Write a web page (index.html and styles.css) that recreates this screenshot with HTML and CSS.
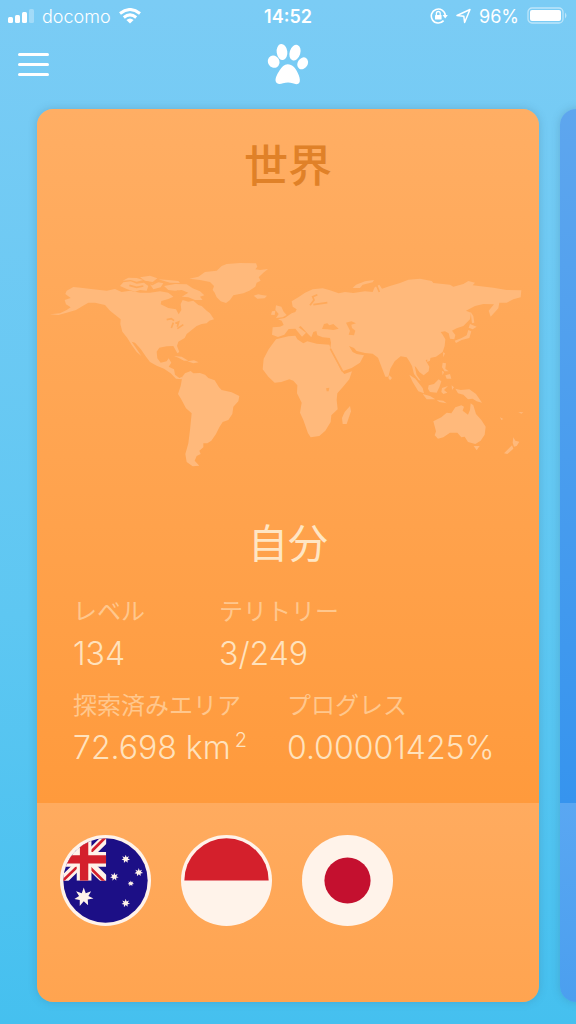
FILE: index.html
```html
<!DOCTYPE html>
<html lang="ja">

<head>
    <meta charset="UTF-8">
    <meta name="viewport" content="width=device-width, initial-scale=1.0">
    <title>世界</title>
    <link rel="stylesheet" href="styles.css">
</head>

<body>
    <div class="status-bar">
        <div class="status-left">
            <svg class="signal" width="26" height="16" viewBox="0 0 26 16" fill="#fff">
                <rect x="0" y="9" width="5" height="6" rx="1.5" />
                <rect x="7" y="7" width="5" height="8" rx="1.5" />
                <rect x="14" y="4" width="5" height="11" rx="1.5" />
                <rect x="21" y="1" width="5" height="14" rx="1.5" opacity="0.3" />
            </svg>
            <span>docomo</span>
            <svg width="22" height="16" viewBox="0 0 22 16" fill="none" stroke="#fff" stroke-width="3">
                <path d="M1 5.5Q11 -2.5 21 5.5" />
                <path d="M4.8 9.5Q11 4.2 17.2 9.5" />
                <path d="M11 15.5L7.4 12Q11 8.8 14.6 12Z" fill="#fff" stroke="none" />
            </svg>
        </div>
        <strong class="clock">14:52</strong>
        <div class="status-right">
            <svg width="18" height="18" viewBox="0 0 18 18" fill="none" stroke="#fff" stroke-width="1.6">
                <path d="M13.6 13.6A7 7 0 1 1 15.3 8.4" />
                <path d="M12.6 8h5.2l-2.6 3.6z" fill="#fff" stroke="none" />
                <rect x="5" y="8" width="6.6" height="4.6" rx="0.6" fill="#fff" stroke="none" />
                <path d="M6.4 8V6.4a1.9 1.9 0 0 1 3.8 0V8" stroke-width="1.3" />
            </svg>
            <svg width="15" height="16" viewBox="0 0 15 16" fill="none" stroke="#fff" stroke-width="1.5"
                stroke-linejoin="round">
                <path d="M1 7.5L14 1.5L8.6 14.5L7.8 8.2Z" />
            </svg>
            <span>96%</span>
            <svg class="battery" width="41" height="18" viewBox="0 0 41 18">
                <rect x="1" y="1" width="35" height="15" rx="4" fill="none" stroke="#fff" stroke-width="1.3"
                    opacity="0.5" />
                <rect x="3" y="3" width="31" height="11" rx="2" fill="#fff" />
                <path d="M38 5.5Q41 8.5 38 11.5Z" fill="#fff" opacity="0.5" />
            </svg>
        </div>
    </div>

    <header class="navbar">
        <button class="menu-button" type="button" aria-label="メニュー">
            <span class="menu-line"></span>
            <span class="menu-line"></span>
            <span class="menu-line"></span>
        </button>
        <svg class="paw" width="42" height="42" viewBox="0 0 126 126" fill="#fff">
            <ellipse cx="20" cy="56" rx="17" ry="19" transform="rotate(-30 20 56)" />
            <ellipse cx="45" cy="27" rx="16" ry="24" transform="rotate(-8 45 27)" />
            <ellipse cx="84" cy="29" rx="16" ry="24" transform="rotate(18 84 29)" />
            <ellipse cx="107" cy="61" rx="15" ry="19" transform="rotate(32 107 61)" />
            <path
                d="M62 64C76 64 86 76 92 89C97 99 100 109 98 117C94 126 85 124 77 121C67 117 57 118 48 121C39 124 29 125 26 115C24 105 31 93 38 82C44 72 52 64 62 64Z" />
        </svg>
    </header>

    <main class="carousel">
        <article class="card card-world">
            <div class="card-main">
                <h1 class="card-title">世界</h1>

                <!-- 世界地図 -->
                <svg class="map" viewBox="-9 0 1506 660" role="img" aria-label="世界地図">
                    <g class="land">
                        <!-- 北アメリカ -->
                        <path
                            d="M30 193L60 190L80 180L92 172L78 163L74 150L92 144L76 132L80 122L100 111L122 113L160 118L200 122L225 117L245 126L270 122L300 128L330 128L360 124L385 128L400 140L385 147L364 153L362 163L385 174L408 178L416 193L424 180L422 162L428 150L445 155L460 152L475 165L485 168L500 182L510 190L522 208L508 212L500 220L485 222L470 228L455 240L440 252L434 264L415 275L411 288L418 306L412 310L400 288L380 289L358 293L350 305L352 325L362 338L380 334L386 325L394 338L386 350L402 358L405 374L418 384L428 380L425 388L408 386L392 370L372 356L350 347L330 336L318 320L302 297L285 278L275 275L292 300L304 318L290 306L275 285L262 264L247 245L241 222L242 208L226 195L210 182L195 165L165 158L145 158L128 168L108 180L80 188L55 195Z" />
                        <!-- 北極圏の島 -->
                        <path d="M240 108L250 97L272 94L290 101L312 98L325 108L320 122L300 120L285 125L262 118Z" />
                        <path d="M248 92L265 83L290 84L310 90L290 95L272 90ZM300 82L330 77L352 85L338 96L315 92Z" />
                        <path d="M330 103L352 96L370 100L362 112L340 118ZM355 88L385 90L415 93L420 99L390 98Z" />
                        <path
                            d="M372 108L405 102L440 103L458 115L480 124L493 136L480 140L488 150L465 150L445 142L425 140L445 128L425 120L405 122L385 120Z" />
                        <!-- カリブ海の島 -->
                        <path d="M402 318L425 320L445 332L432 332L415 323ZM442 334L462 331L476 337L460 340Z" />
                    </g>
                    <g class="land" transform="translate(330 0)">
                        <!-- グリーンランド -->
                        <path
                            d="M118 86L145 80L165 66L200 62L215 48L230 42L270 39L318 40L322 50L316 58L330 60L354 57L340 68L326 82L332 92L320 98L316 110L298 122L280 130L250 136L240 150L228 159L212 154L200 142L194 128L188 120L192 108L180 96L150 90Z" />
                        <path d="M311 137L325 133L335 135L351 137L344 145L322 146Z" />
                        <!-- 南アメリカ -->
                        <path
                            d="M97 380L105 370L122 363L130 370L150 369L165 374L175 384L194 391L207 412L215 420L245 427L268 438L265 454L250 470L247 492L235 510L218 516L208 532L198 552L184 572L172 580L160 580L160 592L148 602L152 612L140 618L134 632L148 647L128 649L110 636L106 612L115 580L120 540L125 490L108 475L92 445L84 432L92 408Z" />
                    </g>
                    <g class="land" transform="translate(630 30)">
                        <!-- ヨーロッパ・アジア -->
                        <path
                            d="M68 202L90 200L101 195L95 182L84 178L104 174L125 160L136 156L140 148L128 140L125 124L145 112L165 98L188 88L218 85L240 91L266 100L285 96L310 99L345 94L368 96L374 82L388 74L396 86L420 78L450 69L475 59L510 56L545 63L550 69L600 74L610 80L640 72L655 63L675 68L668 76L730 83L770 90L814 91L812 112L790 118L770 128L748 128L745 145L722 170L716 152L732 133L700 132L675 138L648 152L663 158L660 178L640 198L620 205L606 212L616 225L613 238L600 236L596 220L585 214L572 216L578 224L586 238L584 258L578 276L558 290L540 294L527 301L538 320L536 334L521 346L508 336L498 322L494 318L500 345L512 362L506 360L492 342L486 318L478 304L470 292L452 289L434 304L421 326L415 350L406 350L396 325L384 293L368 281L345 279L320 273L312 264L297 258L308 276L320 282L342 286L330 308L305 324L277 334L264 312L241 266L243 248L240 234L218 232L202 226L199 213L190 216L184 232L174 222L152 198L146 202L168 218L156 230L136 206L116 207L103 224L84 231L66 224Z" />
                        <path d="M78 136L94 140L101 155L110 165L98 172L78 174L86 162L76 150ZM66 154L76 152L74 165L63 164Z" />
                        <path d="M308 84L318 74L345 64L372 60L368 67L338 74L330 84Z" />
                        <!-- アフリカ -->
                        <path
                            d="M78 238L115 229L136 227L142 238L160 250L172 244L200 251L238 254L246 278L262 308L274 332L283 342L306 334L298 358L278 382L262 400L260 420L263 448L244 466L242 486L226 512L208 528L182 532L174 520L160 480L150 458L155 428L141 400L142 376L130 362L118 358L94 366L74 368L55 350L38 328L41 296L56 268Z" />
                        <path d="M300 438L303 454L290 492L278 492L276 474L284 456Z" />
                        <path d="M418 346L426 354L420 361L415 354Z" />
                    </g>
                    <g class="land" transform="translate(1020 30)">
                        <!-- 日本 -->
                        <path d="M270 192L290 200L278 208L266 203ZM265 210L274 214L268 234L245 240L228 249L224 242L245 234L260 226Z" />
                        <path d="M272 156L280 168L283 188L276 190L274 174ZM141 292L152 290L150 302L142 306ZM189 277L195 280L190 292Z" />
                        <!-- 東南アジア -->
                        <path d="M88 344L106 356L128 384L132 400L115 394L98 366ZM128 402L150 408L166 418L140 418Z" />
                        <path d="M146 376L162 372L176 358L184 364L178 382L170 398L150 396L144 386Z" />
                        <path d="M188 308L198 310L196 326L206 334L194 334L186 322ZM196 346L210 342L214 356L200 356ZM186 332L192 336L188 346Z" />
                        <path d="M186 384L204 378L192 390L202 398L190 402L184 396ZM170 420L190 422L200 430L178 426ZM215 376L222 382L216 390Z" />
                        <path d="M226 386L242 390L268 388L288 402L306 428L290 424L278 416L264 418L250 404L234 400Z" />
                        <!-- オーストラリア -->
                        <path
                            d="M160 484L184 472L200 458L214 460L226 442L244 436L252 440L248 452L264 464L270 450L272 430L280 436L288 462L304 480L317 500L314 524L302 542L286 552L264 546L254 530L244 532L232 518L210 518L190 532L174 536L164 526L168 514Z" />
                        <path d="M281 558L299 558L290 571Z" />
                        <path d="M400 532L406 542L418 545L410 558L402 560L398 548ZM396 556L400 566L382 582L372 580Z" />
                        <path d="M415 456L430 457L424 461ZM360 472L370 477L364 480Z" />
                    </g>
                    <!-- 湖と内海 -->
                    <g class="water" transform="translate(630 30)">
                        <path d="M216 207L222 192L232 190L238 196L250 192L266 206L250 210L232 208Z" />
                        <path d="M288 188L304 184L318 190L304 194L306 204L316 212L312 226L296 224L300 212Z" />
                        <path d="M228 385L238 383L236 394L230 394Z" />
                    </g>
                    <g class="water-line">
                        <path d="M380 209L394 206L402 212M400 218L394 234M406 220L416 216L412 230M412 236L430 224" />
                        <path d="M268 106L290 112L310 108M322 96L336 104L355 94M415 122L408 132L430 136" />
                        <path d="M871 296L908 364M810 166L822 150L818 140L832 134M820 164L862 158M1010 106L1018 126" />
                    </g>
                </svg>

                <h2 class="card-subtitle">自分</h2>

                <div class="stats">
                    <dl class="stat-row">
                        <div class="stat">
                            <dt>レベル</dt>
                            <dd>134</dd>
                        </div>
                        <div class="stat">
                            <dt>テリトリー</dt>
                            <dd>3/249</dd>
                        </div>
                    </dl>
                    <dl class="stat-row">
                        <div class="stat">
                            <dt>探索済みエリア</dt>
                            <dd>72.698 km<sup>2</sup></dd>
                        </div>
                        <div class="stat">
                            <dt>プログレス</dt>
                            <dd>0.00001425%</dd>
                        </div>
                    </dl>
                </div>
            </div>

            <div class="card-footer">
                <button class="flag" type="button" aria-label="オーストラリア">
                    <svg viewBox="90 105 272 272">
                        <defs>
                            <clipPath id="flag-circle">
                                <circle cx="226" cy="241" r="126" />
                            </clipPath>
                            <clipPath id="canton">
                                <rect x="96" y="115" width="132" height="127" />
                            </clipPath>
                        </defs>
                        <circle cx="226" cy="241" r="136" fill="#fff3ea" />
                        <g clip-path="url(#flag-circle)">
                            <rect x="90" y="105" width="272" height="272" fill="#1c0f86" />
                            <g clip-path="url(#canton)">
                                <path d="M93 110L232 246M93 246L232 110" stroke="#fff3ea" stroke-width="26" />
                                <path d="M162 185L232 254M96 244L162 180M168 170L230 108" stroke="#d4202c"
                                    stroke-width="8" />
                                <path d="M162 105V242M90 178H228" stroke="#fff3ea" stroke-width="44" />
                                <path d="M162 105V242M90 178H228" stroke="#d4202c" stroke-width="25" />
                            </g>
                            <g fill="#fff3ea">
                                <path id="star"
                                    d="M161 262L167 279L183 273L175 287L190 295L173 298L174 315L161 303L149 317L149 299L133 296L147 287L138 273L155 279Z" />
                                <use href="#star" transform="translate(214 46) scale(0.45)" />
                                <use href="#star" transform="translate(253 86) scale(0.45)" />
                                <use href="#star" transform="translate(180 99) scale(0.45)" />
                                <use href="#star" transform="translate(214 178) scale(0.45)" />
                                <use href="#star" transform="translate(247 157) scale(0.34 0.32)" />
                            </g>
                        </g>
                    </svg>
                </button>
                <button class="flag" type="button" aria-label="インドネシア">
                    <svg viewBox="0 0 272 272">
                        <circle cx="136" cy="136" r="136" fill="#fff3ea" />
                        <path d="M10 136A126 126 0 0 1 262 136Z" fill="#d4202c" />
                    </svg>
                </button>
                <button class="flag" type="button" aria-label="日本">
                    <svg viewBox="0 0 272 272">
                        <circle cx="136" cy="136" r="136" fill="#fff3ea" />
                        <circle cx="136" cy="136" r="69" fill="#c4102f" />
                    </svg>
                </button>
            </div>
        </article>

        <article class="card card-next">
            <div class="card-main"></div>
            <div class="card-footer"></div>
        </article>
    </main>
</body>

</html>
```
FILE: styles.css
```css
* {
    box-sizing: border-box;
}

body {
    display: flex;
    flex-direction: column;
    min-height: 100vh;
    margin: 0;
    background: linear-gradient(#7bccf5, #5ec7f2 60%, #45c0ef);
    color: #fff;
    font-family: Inter, "Noto Sans CJK JP", sans-serif;
}

button {
    padding: 0;
    border: 0;
    background: none;
    cursor: pointer;
}

/* ステータスバー */
.status-bar {
    display: grid;
    grid-template-columns: 1fr auto 1fr;
    align-items: center;
    height: 32px;
    padding: 0 8px;
    font-size: 18px;
}

.status-left,
.status-right {
    display: flex;
    align-items: center;
    gap: 8px;
}

.status-left {
    font-weight: 300;
}

.status-right {
    justify-content: flex-end;
}

.clock {
    font-weight: 600;
}

/* ナビゲーション */
.navbar {
    display: grid;
    grid-template-columns: 1fr auto 1fr;
    align-items: center;
    height: 64px;
    padding: 0 18px;
}

.menu-button {
    display: flex;
    flex-direction: column;
    gap: 7px;
    width: 31px;
}

.menu-line {
    width: 100%;
    height: 3px;
    border-radius: 2px;
    background: #fff;
}

/* カード */
.carousel {
    display: flex;
    flex: 1;
    gap: 21px;
    padding: 13px 37px 22px;
    overflow: hidden;
}

.card {
    display: flex;
    flex: 0 0 100%;
    flex-direction: column;
    overflow: hidden;
    border-radius: 16px;
    box-shadow: 0 0 8px rgba(60, 110, 140, 0.3);
}

.card-main {
    padding-top: 27px;
    padding-bottom: 31px;
}

.card-footer {
    display: flex;
    flex: 1;
    gap: 30px;
    padding: 32px 23px;
}

.card-world .card-main {
    background: linear-gradient(#ffae64, #ff9a3c);
}

.card-world .card-footer {
    background: linear-gradient(#ffab5f, #ffa450);
}

.card-next .card-main {
    flex: 0 0 694px;
    background: linear-gradient(#5ea6ee, #3694ee);
}

.card-next .card-footer {
    background: linear-gradient(#5aa7f2, #4b9fef);
}

.card-title,
.card-subtitle {
    margin: 0;
    line-height: 60px;
    text-align: center;
}

.card-title {
    color: #e08128;
    font-size: 44px;
    font-weight: 500;
}

.card-subtitle {
    color: #ffe6c4;
    font-size: 40px;
    font-weight: 400;
}

.map {
    display: block;
    width: 100%;
    margin: 54px 0 44px;
}

.land {
    fill: #ffb97b;
}

.water {
    fill: #ffa95a;
}

.water-line {
    fill: none;
    stroke: #ffa95a;
    stroke-width: 5px;
}

/* 統計 */
.stats {
    display: grid;
    gap: 10px;
    margin-top: 20px;
    padding-left: 36px;
}

.stat-row {
    display: flex;
    gap: 40px;
    margin: 0;
}

.stat {
    min-width: 106px;
    white-space: nowrap;
}

.stat dt {
    color: #ffc78d;
    font-size: 24px;
    font-weight: 400;
    line-height: 36px;
}

.stat dd {
    margin: 0;
    color: #ffe2bd;
    font-size: 32px;
    font-weight: 300;
    line-height: 48px;
}

.stat sup {
    margin-left: 4px;
    font-size: 20px;
    line-height: 1;
}

/* 国旗 */
.flag {
    width: 91px;
    height: 91px;
    border-radius: 50%;
}

.flag svg {
    display: block;
    width: 100%;
}
```
